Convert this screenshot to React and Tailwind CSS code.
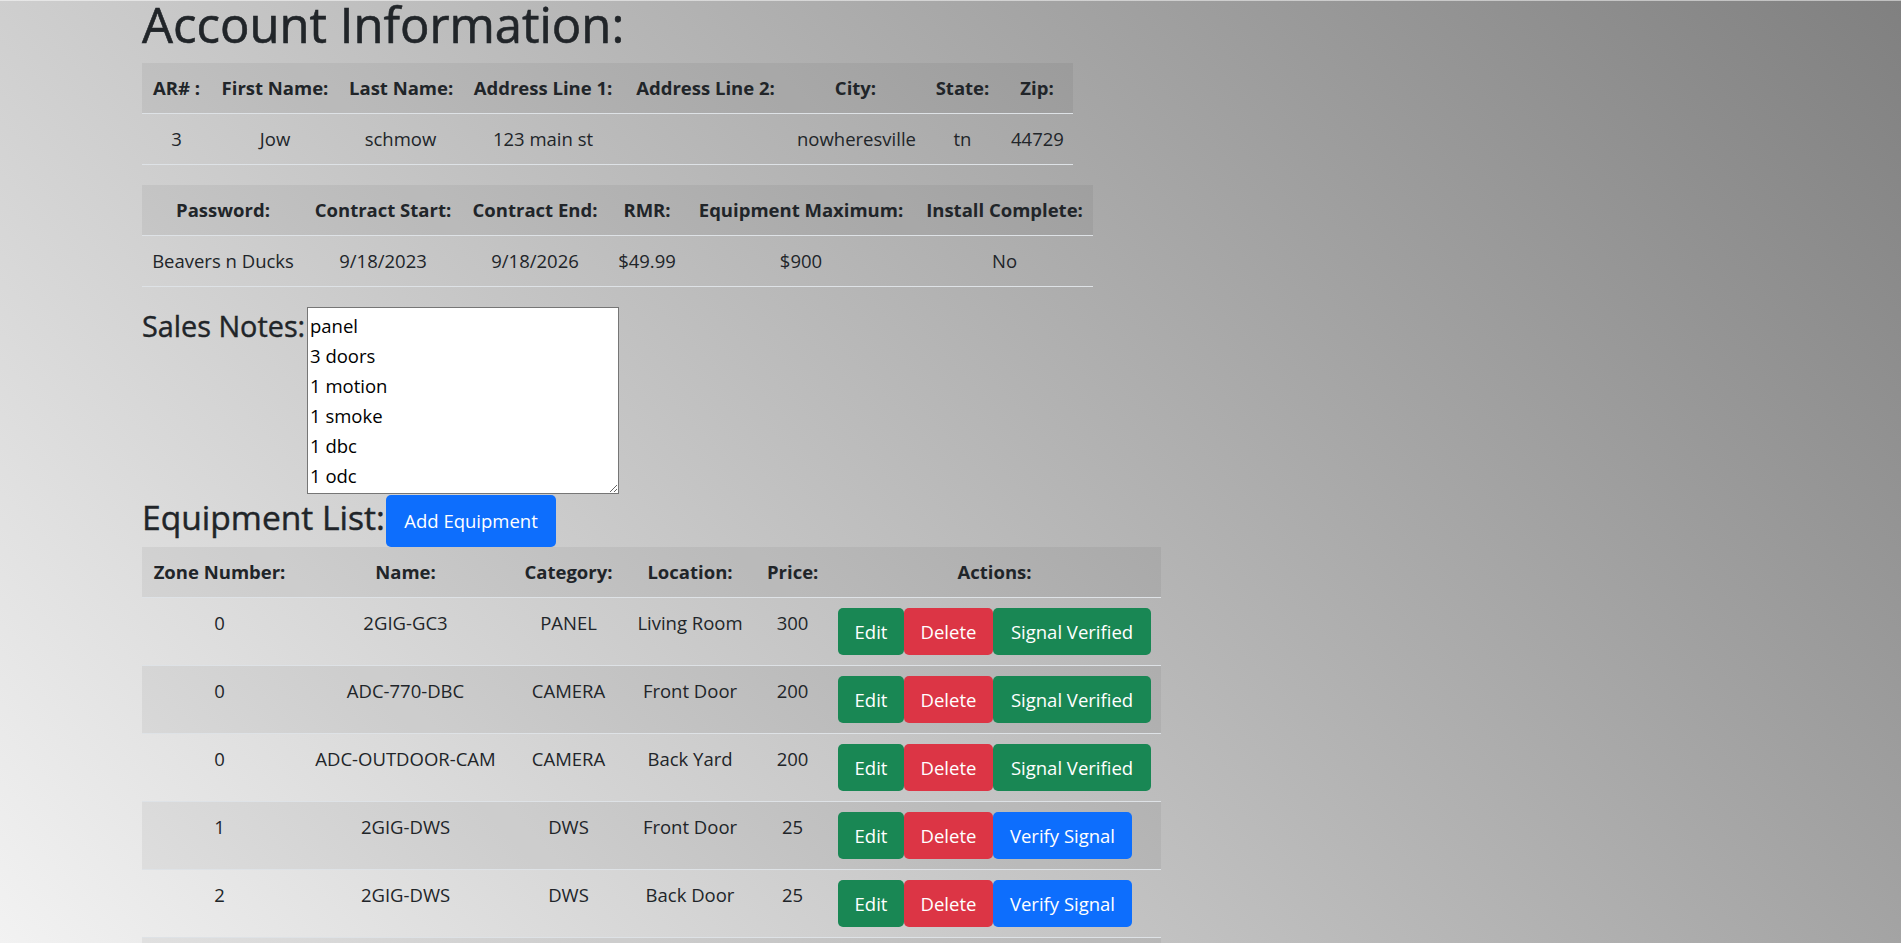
import React from "react";

const acctHead = ["AR# :", "First Name:", "Last Name:", "Address Line 1:", "Address Line 2:", "City:", "State:", "Zip:"];
const acctData = ["3", "Jow", "schmow", "123 main st", "", "nowheresville", "tn", "44729"];

const contractHead = ["Password:", "Contract Start:", "Contract End:", "RMR:", "Equipment Maximum:", "Install Complete:"];
const contractData = ["Beavers n Ducks", "9/18/2023", "9/18/2026", "$49.99", "$900", "No"];

const equipHead = ["Zone Number:", "Name:", "Category:", "Location:", "Price:", "Actions:"];
const equipment = [
  { zone: "0", name: "2GIG-GC3", cat: "PANEL", loc: "Living Room", price: "300", verified: true },
  { zone: "0", name: "ADC-770-DBC", cat: "CAMERA", loc: "Front Door", price: "200", verified: true },
  { zone: "0", name: "ADC-OUTDOOR-CAM", cat: "CAMERA", loc: "Back Yard", price: "200", verified: true },
  { zone: "1", name: "2GIG-DWS", cat: "DWS", loc: "Front Door", price: "25", verified: false },
  { zone: "2", name: "2GIG-DWS", cat: "DWS", loc: "Back Door", price: "25", verified: false },
];

const cell = "px-[10px] py-[10px] leading-[30px] text-center border-b border-[#dee2e6] whitespace-nowrap";

function Btn({ className, children }) {
  return (
    <button
      type="button"
      className={
        "h-[47px] rounded-[5px] text-white text-[18.5px] leading-[30px] flex items-center justify-center shrink-0 " +
        className
      }
    >
      {children}
    </button>
  );
}

export default function App() {
  return (
    <div className="h-screen overflow-hidden bg-[linear-gradient(47.5deg,#f2f2f2,#808080)] font-['Open_Sans',sans-serif] text-[#212529] text-[18.5px]">
      <div className="h-px bg-white/50" />
      <div className="pl-[142px]">
        <h1 className="h-[47px] mb-[15px] text-[49px] leading-[46px] font-normal [-webkit-text-stroke:0.6px_#212529] whitespace-nowrap">
          Account Information:
        </h1>

        <div className="grid grid-cols-[69px_128px_123px_162px_163px_137px_77px_72px] w-[931px]">
          {acctHead.map((h, i) => (
            <div key={"ah" + i} className={cell + " font-bold bg-black/5"}>
              {h}
            </div>
          ))}
          {acctData.map((d, i) => (
            <div key={"ad" + i} className={cell}>
              {d}
            </div>
          ))}
        </div>

        <div className="mt-[20px] grid grid-cols-[162px_158px_146px_78px_230px_177px] w-[951px]">
          {contractHead.map((h, i) => (
            <div key={"ch" + i} className={cell + " font-bold bg-black/5"}>
              {h}
            </div>
          ))}
          {contractData.map((d, i) => (
            <div key={"cd" + i} className={cell}>
              {d}
            </div>
          ))}
        </div>

        <div className="mt-[20px] flex items-start h-[188px]">
          <h4 className="w-[165px] mt-[1px] text-[28.8px] leading-[36px] font-normal [-webkit-text-stroke:0.4px_#212529] whitespace-nowrap">
            Sales Notes:
          </h4>
          <textarea
            readOnly
            defaultValue={"panel\n3 doors\n1 motion\n1 smoke\n1 dbc\n1 odc"}
            className="w-[312px] h-[187px] border border-[#767676] bg-white text-black text-[18.5px] leading-[30px] px-[2px] pt-[3px] pb-[1px] outline-none overflow-hidden"
          />
        </div>

        <div className="flex items-start h-[52px]">
          <h3 className="w-[244px] mt-[1px] text-[33.6px] leading-[42px] font-normal [-webkit-text-stroke:0.45px_#212529] whitespace-nowrap">
            Equipment List:
          </h3>
          <button
            type="button"
            className="w-[170px] h-[52px] rounded-[5px] bg-[#0d6efd] text-white text-[18.5px] leading-[30px] flex items-center justify-center"
          >
            Add Equipment
          </button>
        </div>

        <div className="grid grid-cols-[155px_217px_109px_134px_71px_333px] w-[1019px]">
          {equipHead.map((h, i) => (
            <div key={"eh" + i} className={cell + " font-bold bg-black/5"}>
              {h}
            </div>
          ))}
          {equipment.map((e, r) => {
            const stripe = r % 2 === 1 ? " bg-black/5" : "";
            return (
              <React.Fragment key={"er" + r}>
                <div className={cell + stripe}>{e.zone}</div>
                <div className={cell + stripe}>{e.name}</div>
                <div className={cell + stripe}>{e.cat}</div>
                <div className={cell + stripe}>{e.loc}</div>
                <div className={cell + stripe}>{e.price}</div>
                <div className={"px-[10px] py-[10px] border-b border-[#dee2e6] flex" + stripe}>
                  <Btn className="w-[66px] bg-[#198754]">Edit</Btn>
                  <Btn className="w-[89px] bg-[#dc3545]">Delete</Btn>
                  {e.verified ? (
                    <Btn className="w-[158px] bg-[#198754]">Signal Verified</Btn>
                  ) : (
                    <Btn className="w-[139px] bg-[#0d6efd]">Verify Signal</Btn>
                  )}
                </div>
              </React.Fragment>
            );
          })}
          <div className="col-span-6 h-[68px] bg-black/5 border-b border-[#dee2e6]" />
        </div>
      </div>
    </div>
  );
}
